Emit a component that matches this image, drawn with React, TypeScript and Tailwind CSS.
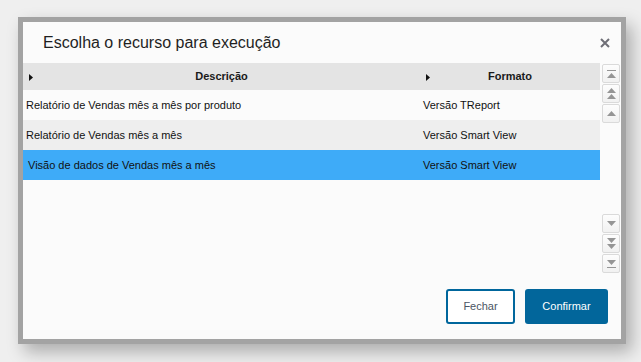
import React from "react";

const Tri = ({ dir }: { dir: "up" | "down" }) => (
  <svg width="9" height="5" viewBox="0 0 9 5" className="block">
    {dir === "up" ? <polygon points="4.5,0 9,5 0,5" fill="#959595" /> : <polygon points="0,0 9,0 4.5,5" fill="#959595" />}
  </svg>
);

const ScrollBtn = ({ kind }: { kind: "top" | "pgup" | "up" | "down" | "pgdn" | "bottom" }) => (
  <div className="w-[18px] h-[19px] border border-[#dadada] rounded-[2px] bg-gradient-to-b from-[#fdfdfd] to-[#f1f1f1] flex flex-col items-center justify-center">
    {kind === "top" && (
      <>
        <div className="w-[9px] h-px bg-[#959595] mb-[2px]" />
        <Tri dir="up" />
      </>
    )}
    {kind === "pgup" && (
      <>
        <Tri dir="up" />
        <div className="mt-px"><Tri dir="up" /></div>
      </>
    )}
    {kind === "up" && <Tri dir="up" />}
    {kind === "down" && <Tri dir="down" />}
    {kind === "pgdn" && (
      <>
        <Tri dir="down" />
        <div className="mt-px"><Tri dir="down" /></div>
      </>
    )}
    {kind === "bottom" && (
      <>
        <Tri dir="down" />
        <div className="w-[9px] h-px bg-[#959595] mt-[2px]" />
      </>
    )}
  </div>
);

const HeadArrow = () => (
  <svg width="4" height="7" viewBox="0 0 4 7" className="block">
    <polygon points="0,0 4,3.5 0,7" fill="#111" />
  </svg>
);

const rows = [
  { d: "Relatório de Vendas mês a mês por produto", f: "Versão TReport", bg: "bg-[#fbfbfb]", pl: "pl-[3px]" },
  { d: "Relatório de Vendas mês a mês", f: "Versão Smart View", bg: "bg-[#eeeeee]", pl: "pl-[3px]" },
  { d: "Visão de dados de Vendas mês a mês", f: "Versão Smart View", bg: "bg-[#3eabf8]", pl: "pl-[5px]" },
];

export default function App() {
  return (
    <div
      className="w-[641px] h-[362px] bg-[#efefef] pl-[18px] pt-[17px] overflow-hidden"
      style={{ fontFamily: '"Liberation Sans", Arial, sans-serif' }}
    >
      <div className="w-[608px] h-[327px] border-[5px] border-[#a3a3a3] bg-[#fbfbfb] shadow-[6px_8px_16px_rgba(0,0,0,0.28)] flex flex-col">
        <div className="h-[41px] flex items-center justify-between pl-[20px] pr-[11px]">
          <span className="text-[16px] text-[#1f1f1f] leading-none pt-[1px]">Escolha o recurso para execução</span>
          <svg width="10" height="10" viewBox="0 0 10 10" className="block">
            <path d="M1 1 L9 9 M9 1 L1 9" stroke="#6e6e76" strokeWidth="2" />
          </svg>
        </div>
        <div className="flex">
          <div className="w-[577px] flex flex-col">
            <div className="h-[27px] bg-[#e4e4e4] flex text-[11px] font-bold text-[#1a1a1a]">
              <div className="w-[397px] relative flex items-center justify-center">
                <div className="absolute left-[6px] top-[11px]"><HeadArrow /></div>
                Descrição
              </div>
              <div className="flex-1 relative flex items-center justify-center">
                <div className="absolute left-[6px] top-[11px]"><HeadArrow /></div>
                Formato
              </div>
            </div>
            {rows.map((r, i) => (
              <div key={i} className={`h-[30px] flex items-center text-[11px] text-[#111] ${r.bg}`}>
                <div className={`w-[397px] ${r.pl}`}>{r.d}</div>
                <div className="flex-1 pl-[3px]">{r.f}</div>
              </div>
            ))}
          </div>
          <div className="ml-[2px] w-[18px] h-[210px] flex flex-col justify-between pt-[1px] pb-[0px]">
            <div className="flex flex-col gap-[1px]">
              <ScrollBtn kind="top" />
              <ScrollBtn kind="pgup" />
              <ScrollBtn kind="up" />
            </div>
            <div className="flex flex-col gap-[1px]">
              <ScrollBtn kind="down" />
              <ScrollBtn kind="pgdn" />
              <ScrollBtn kind="bottom" />
            </div>
          </div>
        </div>
        <div className="flex-1 flex justify-end items-start gap-[10px] pr-[13px] pt-[16px]">
          <button className="w-[69px] h-[35px] border-2 border-[#00669c] rounded-[3px] text-[11px] text-[#4b5563] bg-white">Fechar</button>
          <button className="w-[83px] h-[35px] rounded-[3px] text-[11px] text-white bg-[#02669b]">Confirmar</button>
        </div>
      </div>
    </div>
  );
}
